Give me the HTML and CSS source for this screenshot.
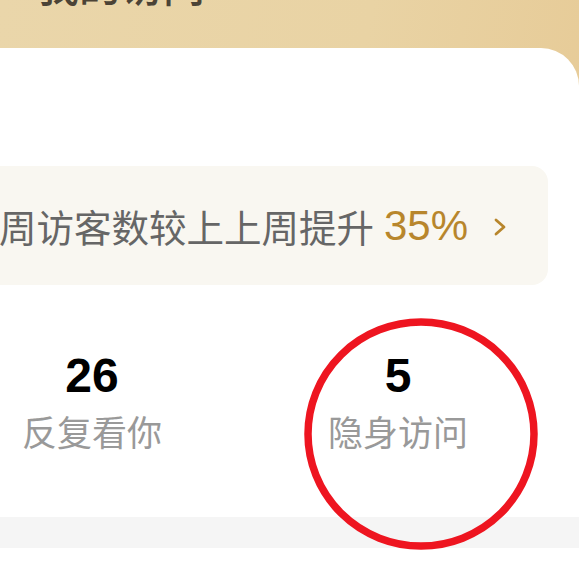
FILE: index.html
```html
<!DOCTYPE html>
<html lang="zh-CN">
<head>
<meta charset="utf-8">
<title>我的访问</title>
<link rel="stylesheet" href="styles.css">
</head>
<body>
<div class="page">
  <header class="header">
    <h1 class="title">我的访问</h1>
  </header>
  <main class="card">
    <div class="banner">
      <span class="banner-text">周访客数较上上周提升</span>
      <span class="banner-pct">35%</span>
      <svg class="chev" viewBox="0 0 16 20" width="16" height="20"><path d="M4 3 L12 10 L4 17" fill="none" stroke="#b8862c" stroke-width="2.8" stroke-linecap="round" stroke-linejoin="round"/></svg>
    </div>
    <div class="stats">
      <div class="stat">
        <div class="num">26</div>
        <div class="label">反复看你</div>
      </div>
      <div class="stat">
        <div class="num">5</div>
        <div class="label">隐身访问</div>
      </div>
    </div>
    <div class="divider"></div>
    <svg class="mark" viewBox="0 0 244 240" width="244" height="240"><ellipse cx="122" cy="120" rx="113" ry="112" fill="none" stroke="#ee1520" stroke-width="7.5"/></svg>
  </main>
</div>
</body>
</html>
```
FILE: styles.css
```css
html, body {
  margin: 0;
  padding: 0;
}
body {
  width: 579px;
  height: 562px;
  overflow: hidden;
  font-family: "Noto Sans CJK SC", "Liberation Sans", sans-serif;
  background: linear-gradient(100deg, #ead6aa 0%, #e9d3a4 55%, #e6c994 100%);
}
.page {
  position: relative;
  width: 579px;
  height: 562px;
}
.header {
  height: 48px;
  overflow: hidden;
}
.title {
  margin: -37px 0 0 37px;
  font-size: 42px;
  line-height: 42px;
  font-weight: 500;
  color: #4b4336;
}
.card {
  position: relative;
  height: 514px;
  background: #ffffff;
  border-top-right-radius: 38px;
  padding-top: 118px;
  box-sizing: border-box;
}
.banner {
  margin-left: -40px;
  width: 588px;
  height: 119px;
  box-sizing: border-box;
  border-radius: 16px;
  background: #f9f7f1;
  display: flex;
  align-items: center;
  padding-left: 39px;
}
.banner-text {
  font-size: 37.5px;
  font-weight: 400;
  color: #666666;
}
.banner-pct {
  margin-left: 10px;
  font-family: "Liberation Sans", sans-serif;
  font-size: 42px;
  color: #b8862c;
}
.chev {
  margin-left: 24px;
  margin-top: 2px;
}
.stats {
  display: flex;
  margin-left: -61px;
  padding-top: 67px;
}
.stat {
  width: 306px;
  display: flex;
  flex-direction: column;
  align-items: center;
}
.num {
  font-family: "Liberation Sans", sans-serif;
  font-weight: 700;
  font-size: 48px;
  line-height: 48px;
  color: #000000;
}
.label {
  margin-top: 9px;
  font-size: 35px;
  line-height: 44px;
  color: #999999;
}
.divider {
  position: absolute;
  left: 0;
  right: 0;
  top: 469px;
  height: 31px;
  background: #f5f5f5;
}
.mark {
  position: absolute;
  left: 299px;
  top: 266px;
}
```
